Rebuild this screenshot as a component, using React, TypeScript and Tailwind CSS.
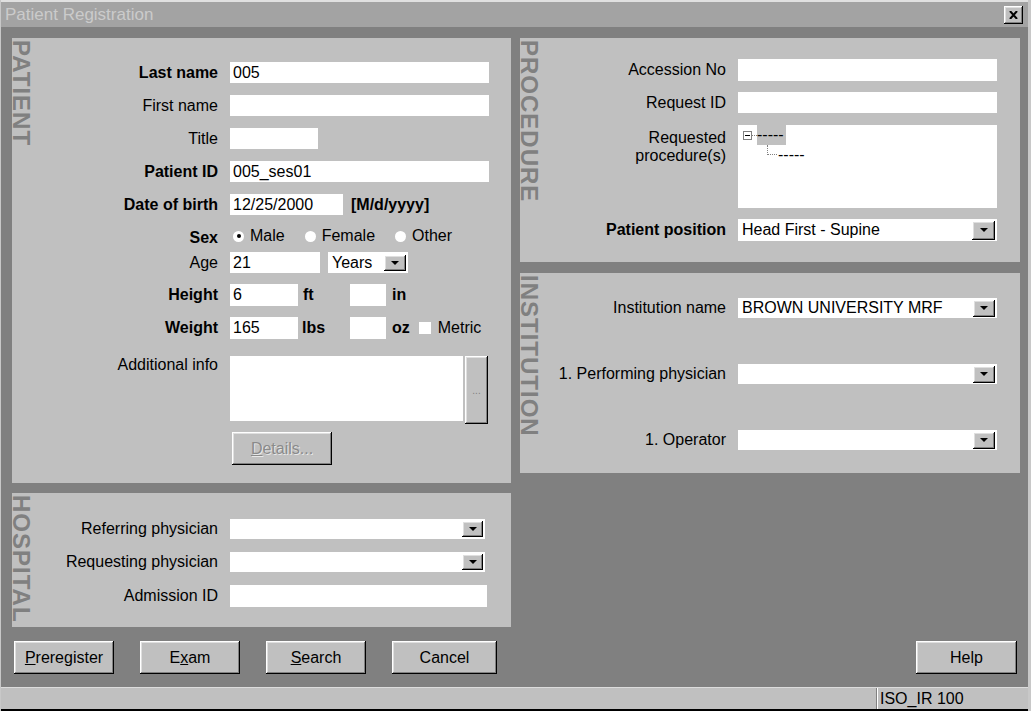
import React from "react";

const bevel =
  "shadow-[inset_-1px_-1px_#000,inset_1px_1px_#fff,inset_-2px_-2px_#808080,inset_2px_2px_#dfdfdf]";

const DropBtn = ({ className = "w-[22px] h-[17px]" }: { className?: string }) => (
  <div className={`bg-[#c0c0c0] flex items-center justify-center ${bevel} ${className}`}>
    <div className="w-0 h-0 border-x-[4px] border-x-transparent border-t-[4px] border-t-black" />
  </div>
);

const Combo = ({
  className,
  value,
  btn,
}: {
  className: string;
  value?: string;
  btn?: string;
}) => (
  <div className={`bg-white flex items-center justify-between pl-[4px] pr-[2px] ${className}`}>
    <span className="leading-none">{value}</span>
    <DropBtn className={btn} />
  </div>
);

const Input = ({ className, value }: { className: string; value?: string }) => (
  <div className={`bg-white flex items-center pl-[3px] leading-none ${className}`}>{value}</div>
);

const Label = ({ text, bold, className = "w-[200px]" }: { text: string; bold?: boolean; className?: string }) => (
  <div className={`text-right shrink-0 pr-[12px] leading-none ${bold ? "font-bold" : ""} ${className}`}>
    {text}
  </div>
);

const Panel = ({
  label,
  className,
  children,
}: {
  label: string;
  className: string;
  children: React.ReactNode;
}) => (
  <div className={`flex bg-[#c0c0c0] ${className}`}>
    <div className="w-[18px] shrink-0 pt-[2px] overflow-visible">
      <span className="[writing-mode:vertical-rl] text-[24px] font-bold leading-[18px] tracking-[1px] text-[#808080] block">
        {label}
      </span>
    </div>
    <div className="flex-1 flex flex-col">{children}</div>
  </div>
);

const Button = ({ children, className = "w-[100px]" }: { children: React.ReactNode; className?: string }) => (
  <div className={`h-[33px] bg-[#c0c0c0] flex items-center justify-center ${bevel} ${className}`}>
    {children}
  </div>
);

const Radio = ({ checked, label }: { checked?: boolean; label: string }) => (
  <div className="flex items-center">
    <div className="w-[11px] h-[11px] rounded-full bg-white flex items-center justify-center">
      {checked && <div className="w-[4px] h-[4px] rounded-full bg-black" />}
    </div>
    <span className="ml-[6px] leading-none">{label}</span>
  </div>
);

export default function App() {
  return (
    <div className="w-[1031px] h-[711px] bg-[#808080] flex flex-col overflow-hidden text-[16px] text-black font-['Liberation_Sans',Arial,sans-serif] border-l border-r-[3px] border-[#c8c8c8]">
      {/* title bar */}
      <div className="h-[27px] shrink-0 bg-[#a3a3a3] border-t-2 border-[#e0e0e0] flex items-center justify-between pl-[4px] pr-[5px]">
        <span className="text-[17px] text-[#cbcbcb] leading-none">Patient Registration</span>
        <div className={`w-[19px] h-[18px] bg-[#c0c0c0] flex items-center justify-center ${bevel}`}>
          <svg width="9" height="8" viewBox="0 0 9 8">
            <path d="M1 0 L8 8 M8 0 L1 8" stroke="#000" strokeWidth="2" />
          </svg>
        </div>
      </div>

      <div className="flex gap-[9px] pl-[11px] pt-[11px] shrink-0">
        {/* left column */}
        <div className="w-[499px] flex flex-col gap-[10px]">
          <Panel label="PATIENT" className="h-[445px]">
            <div className="flex items-center h-[21px] mt-[24px]">
              <Label text="Last name" bold />
              <Input className="w-[259px] h-[21px]" value="005" />
            </div>
            <div className="flex items-center h-[21px] mt-[12px]">
              <Label text="First name" />
              <Input className="w-[259px] h-[21px]" />
            </div>
            <div className="flex items-center h-[21px] mt-[12px]">
              <Label text="Title" />
              <Input className="w-[88px] h-[21px]" />
            </div>
            <div className="flex items-center h-[21px] mt-[12px]">
              <Label text="Patient ID" bold />
              <Input className="w-[259px] h-[21px]" value="005_ses01" />
            </div>
            <div className="flex items-center h-[21px] mt-[12px]">
              <Label text="Date of birth" bold />
              <Input className="w-[113px] h-[21px]" value="12/25/2000" />
              <span className="ml-[8px] font-bold leading-none">[M/d/yyyy]</span>
            </div>
            <div className="flex items-center h-[20px] mt-[11px]">
              <Label text="Sex" bold className="w-[200px] pt-[4px]" />
              <div className="flex items-center pl-[3px]">
                <Radio checked label="Male" />
                <div className="ml-[20px]">
                  <Radio label="Female" />
                </div>
                <div className="ml-[20px]">
                  <Radio label="Other" />
                </div>
              </div>
            </div>
            <div className="flex items-center h-[21px] mt-[6px]">
              <Label text="Age" />
              <Input className="w-[90px] h-[21px]" value="21" />
              <Combo className="ml-[8px] w-[80px] h-[21px]" value="Years" btn="w-[22px] h-[16px]" />
            </div>
            <div className="flex items-center h-[22px] mt-[11px]">
              <Label text="Height" bold />
              <Input className="w-[68px] h-[22px]" value="6" />
              <span className="ml-[5px] w-[47px] font-bold leading-none">ft</span>
              <Input className="w-[36px] h-[22px]" />
              <span className="ml-[6px] font-bold leading-none">in</span>
            </div>
            <div className="flex items-center h-[22px] mt-[11px]">
              <Label text="Weight" bold />
              <Input className="w-[68px] h-[22px]" value="165" />
              <span className="ml-[4px] w-[48px] font-bold leading-none">lbs</span>
              <Input className="w-[36px] h-[22px]" />
              <span className="ml-[6px] font-bold leading-none">oz</span>
              <div className="ml-[9px] w-[12px] h-[12px] bg-white" />
              <span className="ml-[7px] leading-none">Metric</span>
            </div>
            <div className="flex items-start mt-[17px]">
              <Label text="Additional info" className="w-[200px] pt-[1px]" />
              <div className="w-[233px] h-[65px] bg-white" />
              <div className={`ml-[2px] w-[23px] h-[68px] bg-[#c0c0c0] flex items-center justify-center text-[10px] text-[#808080] ${bevel}`}>
                ...
              </div>
            </div>
            <div className="flex mt-[8px] pl-[202px]">
              <Button>
                <span className="text-[#8a8a8a] [text-shadow:1px_1px_#e8e8e8]">
                  <u>D</u>etails...
                </span>
              </Button>
            </div>
          </Panel>

          <Panel label="HOSPITAL" className="h-[134px]">
            <div className="flex items-center h-[20px] mt-[26px]">
              <Label text="Referring physician" />
              <Combo className="w-[255px] h-[20px]" btn="w-[21px] h-[16px]" />
            </div>
            <div className="flex items-center h-[20px] mt-[13px]">
              <Label text="Requesting physician" />
              <Combo className="w-[255px] h-[20px]" btn="w-[21px] h-[16px]" />
            </div>
            <div className="flex items-center h-[22px] mt-[13px]">
              <Label text="Admission ID" />
              <Input className="w-[257px] h-[22px]" />
            </div>
          </Panel>
        </div>

        {/* right column */}
        <div className="w-[500px] flex flex-col gap-[11px]">
          <Panel label="PROCEDURE" className="h-[224px]">
            <div className="flex items-center h-[22px] mt-[21px]">
              <Label text="Accession No" />
              <Input className="w-[259px] h-[22px]" />
            </div>
            <div className="flex items-center h-[21px] mt-[11px]">
              <Label text="Request ID" />
              <Input className="w-[259px] h-[21px]" />
            </div>
            <div className="flex items-start mt-[12px]">
              <div className="w-[200px] shrink-0 pr-[12px] text-right leading-[18px] pt-[4px]">
                Requested
                <br />
                procedure(s)
              </div>
              <div className="w-[259px] h-[83px] bg-white pl-[5px] flex flex-col">
                <div className="flex items-center h-[20px]">
                  <div className="w-[9px] h-[9px] border border-[#808080] flex items-center justify-center">
                    <div className="w-[5px] h-px bg-black" />
                  </div>
                  <div className="w-[5px] border-t border-dotted border-[#808080]" />
                  <span className="bg-[#c0c0c0] h-[20px] w-[29px] leading-[20px]">-----</span>
                </div>
                <div className="flex items-start ml-[24px]">
                  <div className="w-[10px] h-[10px] border-l border-b border-dotted border-[#808080]" />
                  <span className="ml-[1px] leading-[16px] pt-[2px]">-----</span>
                </div>
              </div>
            </div>
            <div className="flex items-center h-[22px] mt-[11px]">
              <Label text="Patient position" bold />
              <Combo className="w-[259px] h-[22px]" value="Head First - Supine" btn="w-[23px] h-[19px]" />
            </div>
          </Panel>

          <Panel label="INSTITUTION" className="h-[200px]">
            <div className="flex items-center h-[20px] mt-[25px]">
              <Label text="Institution name" />
              <Combo className="w-[259px] h-[20px]" value="BROWN UNIVERSITY MRF" />
            </div>
            <div className="flex items-center h-[20px] mt-[46px]">
              <Label text="1. Performing physician" />
              <Combo className="w-[259px] h-[20px]" />
            </div>
            <div className="flex items-center h-[20px] mt-[46px]">
              <Label text="1. Operator" />
              <Combo className="w-[259px] h-[20px]" />
            </div>
          </Panel>
        </div>
      </div>

      {/* buttons */}
      <div className="flex items-center mt-[14px] pl-[13px] pr-[11px] gap-[26px] shrink-0">
        <Button>
          <span>
            <u>P</u>reregister
          </span>
        </Button>
        <Button>
          <span>
            E<u>x</u>am
          </span>
        </Button>
        <Button>
          <span>
            <u>S</u>earch
          </span>
        </Button>
        <Button className="w-[105px]">Cancel</Button>
        <div className="flex-1" />
        <Button className="w-[101px]">Help</Button>
      </div>

      {/* status bar */}
      <div className="mt-[13px] h-[24px] shrink-0 bg-[#c0c0c0] border-t border-[#dcdcdc] border-b-2 border-b-black flex">
        <div className="w-[876px] border-r border-[#808080]" />
        <div className="flex-1 border-l border-white pl-[2px] flex items-center leading-none">ISO_IR 100</div>
      </div>
    </div>
  );
}
